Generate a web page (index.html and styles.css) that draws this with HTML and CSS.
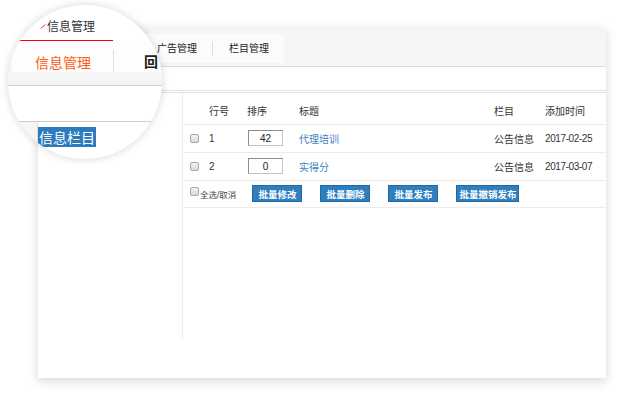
FILE: index.html
```html
<!DOCTYPE html>
<html lang="zh-CN">
<head>
    <meta charset="UTF-8">
    <title>信息管理</title>
    <link rel="stylesheet" href="styles.css">
</head>
<body>

    <div class="stage">

        <!-- Janela principal -->
        <div class="window">
            <div class="tabbar">
                <!-- as primeiras abas ficam sob a lupa -->
                <div class="tabs">
                    <span class="tab">广告管理</span>
                    <span class="sep"></span>
                    <span class="tab">栏目管理</span>
                </div>
            </div>

            <div class="toolbar"></div>

            <div class="main">
                <div class="sidebar"></div>

                <div class="content">
                    <table class="list">
                        <colgroup>
                            <col class="c-check">
                            <col class="c-no">
                            <col class="c-sort">
                            <col class="c-title">
                            <col class="c-cat">
                            <col class="c-date">
                        </colgroup>
                        <tr class="head">
                            <td></td>
                            <td>行号</td>
                            <td>排序</td>
                            <td>标题</td>
                            <td>栏目</td>
                            <td>添加时间</td>
                        </tr>
                        <tr class="row">
                            <td><input type="checkbox" class="check"></td>
                            <td>1</td>
                            <td><input type="text" class="sort" value="42"></td>
                            <td><a href="#" class="link">代理培训</a></td>
                            <td>公告信息</td>
                            <td class="date">2017-02-25</td>
                        </tr>
                        <tr class="row">
                            <td><input type="checkbox" class="check"></td>
                            <td>2</td>
                            <td><input type="text" class="sort" value="0"></td>
                            <td><a href="#" class="link">实得分</a></td>
                            <td>公告信息</td>
                            <td class="date">2017-03-07</td>
                        </tr>
                        <tr class="actions">
                            <td colspan="6">
                                <div class="action-bar">
                                    <label class="select-all"><input type="checkbox" class="check">全选/取消</label>
                                    <button class="btn">批量修改</button>
                                    <button class="btn">批量删除</button>
                                    <button class="btn">批量发布</button>
                                    <button class="btn btn-wide">批量撤销发布</button>
                                </div>
                            </td>
                        </tr>
                    </table>
                </div>
            </div>
        </div>

        <!-- Lupa sobre o canto superior esquerdo -->
        <div class="magnifier">
            <div class="mag-head">
                <svg class="mag-mark" width="6" height="5" viewBox="0 0 6 5"><path d="M0.5 4.5 L5.5 0.5" stroke="#f04040" stroke-width="1" fill="none"/></svg>
                信息管理
            </div>
            <div class="mag-tabbar">
                <div class="mag-tabs">
                    <span class="mag-tab active">信息管理</span>
                    <span class="mag-sep"></span>
                    <span class="mag-tab">回</span>
                </div>
            </div>
            <div class="mag-toolbar"></div>
            <div class="mag-side">
                <div class="mag-strip"></div>
                <div class="mag-menu">
                    <span class="mag-item">信息栏目</span>
                </div>
            </div>
        </div>

    </div>

</body>
</html>
```

FILE: styles.css
```css
* {
    margin: 0;
    padding: 0;
    box-sizing: border-box;
}

body {
    font-family: "Liberation Sans", "Noto Sans CJK SC", sans-serif;
    font-size: 10px;
    color: #333;
    background-color: #ffffff;
    width: 623px;
    height: 394px;
    overflow: hidden;
}

.stage {
    position: relative;
    width: 623px;
    height: 394px;
    padding: 28px 0 0 38px;
}

/* Janela */
.window {
    width: 568px;
    height: 350px;
    background-color: #ffffff;
    box-shadow: 0 3px 10px rgba(0, 0, 0, 0.16);
    display: flex;
    flex-direction: column;
}

.tabbar {
    height: 39px;
    background-color: #f4f5f5;
    border-bottom: 1px solid #dcdcdc;
    padding-top: 6px;
    display: flex;
    align-items: flex-start;
}

.tabs {
    display: flex;
    align-items: center;
    height: 29px;
    margin-left: 90px;
    padding-left: 13px;
    background-color: #fbfbfb;
}

.tab {
    flex-shrink: 0;
    white-space: nowrap;
    padding: 0 15px 0 16px;
    line-height: 29px;
    color: #222;
}

.sep {
    flex-shrink: 0;
    width: 1px;
    height: 14px;
    background-color: #dedede;
}

.toolbar {
    height: 26px;
    border-bottom: 3px double #e0e0e0;
}

.main {
    display: flex;
    height: 247px;
}

.sidebar {
    width: 145px;
    border-right: 1px solid #ededed;
}

.content {
    flex: 1;
}

/* Tabela */
.list {
    width: 423px;
    border-collapse: collapse;
    table-layout: fixed;
}

.c-check { width: 21px; }
.c-no { width: 39px; }
.c-sort { width: 52px; }
.c-title { width: 195px; }
.c-cat { width: 51px; }
.c-date { width: 65px; }

.list td {
    border-bottom: 1px solid #ececec;
    padding-left: 4px;
    vertical-align: middle;
    white-space: nowrap;
}

.list td:first-child {
    padding-left: 7px;
}

.list td:nth-child(2) {
    padding-left: 5px;
}

.head td {
    height: 31px;
    padding-top: 4px;
}

.row td {
    height: 28px;
}

.date {
    letter-spacing: -0.4px;
}

.check {
    appearance: none;
    -webkit-appearance: none;
    display: block;
    width: 9px;
    height: 9px;
    border: 1px solid #a8a8a8;
    border-radius: 2px;
    background: linear-gradient(#f2f2f2, #d9d9d9);
}

.sort {
    display: block;
    width: 35px;
    height: 16px;
    margin-left: 1px;
    border: 1px solid #8d8d8d;
    border-bottom-color: #c4c4c4;
    border-right-color: #c4c4c4;
    font-family: "Liberation Sans", sans-serif;
    font-size: 10px;
    color: #222;
    text-align: center;
}

.link {
    color: #3d7fbf;
    text-decoration: none;
}

.actions td {
    height: 27px;
}

.action-bar {
    display: flex;
    align-items: center;
    gap: 18px;
}

.select-all {
    display: flex;
    align-items: center;
    gap: 1px;
    font-size: 8.5px;
    color: #444;
    margin-right: -2px;
}

.select-all .check {
    margin-top: -5px;
}

.btn {
    height: 17px;
    padding: 0 5px;
    font-family: "Noto Sans CJK SC", sans-serif;
    font-size: 9.5px;
    font-weight: bold;
    color: #ffffff;
    background-color: #2f7fbf;
    border: 1px solid #1e6aa6;
}

.btn-wide {
    padding: 0 2px;
}

/* Lupa */
.magnifier {
    position: absolute;
    left: 8px;
    top: 5px;
    width: 154px;
    height: 154px;
    border-radius: 50%;
    overflow: hidden;
    background-color: #ffffff;
    box-shadow: 0 0 9px rgba(0, 0, 0, 0.16);
    display: flex;
    flex-direction: column;
    font-family: "Noto Sans CJK SC", sans-serif;
}

.mag-head {
    height: 35px;
    padding: 5px 0 0 32px;
    display: flex;
    align-items: center;
    gap: 1px;
    font-size: 12px;
    color: #333;
}

.mag-mark {
    margin-top: 3px;
}

.mag-tabbar {
    height: 46px;
    background-color: #f4f5f5;
    border-bottom: 1px solid #cfcfcf;
}

.mag-tabs {
    display: flex;
    align-items: flex-end;
    height: 32px;
    margin-left: 4px;
    width: 200px;
    background-color: #fdfdfd;
}

.mag-tab {
    flex-shrink: 0;
    white-space: nowrap;
    line-height: 22px;
    height: 32px;
    padding-top: 10px;
    font-size: 14px;
    color: #222;
    font-weight: bold;
    padding-left: 30px;
}

.mag-tab.active {
    width: 101px;
    padding-left: 23px;
    border-top: 1px solid #ff0000;
    color: #ff5a14;
    font-weight: normal;
}

.mag-sep {
    flex-shrink: 0;
    width: 1px;
    height: 22px;
    background-color: #dddddd;
}

.mag-toolbar {
    height: 36px;
    border-bottom: 1px solid #cfcfcf;
}

.mag-side {
    flex: 1;
    display: flex;
}

.mag-strip {
    width: 30px;
    background-color: #f6f6f6;
    border-right: 1px solid #dddddd;
}

.mag-menu {
    padding-top: 5px;
}

.mag-item {
    display: block;
    padding: 0 1px;
    font-size: 14px;
    line-height: 20px;
    color: #ffffff;
    background-color: #2c7bbd;
}
```
